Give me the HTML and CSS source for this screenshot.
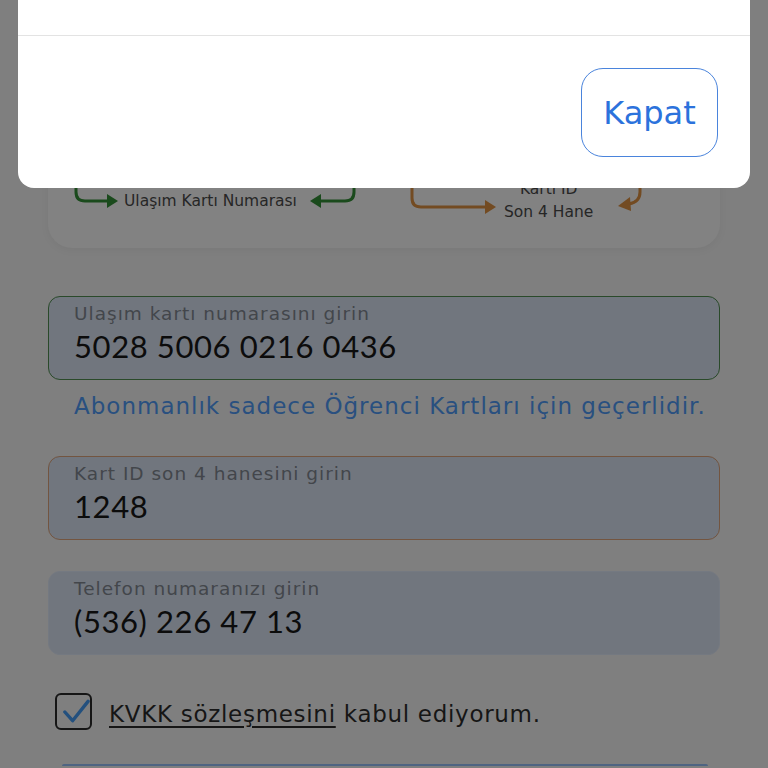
FILE: index.html
```html
<!DOCTYPE html>
<html lang="tr">
<head>
<meta charset="utf-8">
<title>Abonelik</title>
<link rel="stylesheet" href="styles.css">
</head>
<body>
<div class="page">
  <div class="card">
    <div class="diagram">
      <div class="group group-left">
        <svg class="br" width="46" height="36" viewBox="0 0 46 36">
          <path d="M2 0 V12 Q2 21 11 21 H34" fill="none" stroke="#1a4a1c" stroke-width="3" stroke-linecap="round"/>
          <path d="M33 14 L44 21 L33 28 Z" fill="#1a4a1c"/>
        </svg>
        <span class="diag-text">Ulaşım Kartı Numarası</span>
        <svg class="br" width="48" height="36" viewBox="0 0 48 36">
          <path d="M46 0 V12 Q46 21 37 21 H12" fill="none" stroke="#1a4a1c" stroke-width="3" stroke-linecap="round"/>
          <path d="M13 14 L2 21 L13 28 Z" fill="#1a4a1c"/>
        </svg>
      </div>
      <div class="group group-right">
        <svg class="br" width="88" height="36" viewBox="0 0 88 36">
          <path d="M2 0 V18 Q2 27 11 27 H76" fill="none" stroke="#734b22" stroke-width="3" stroke-linecap="round"/>
          <path d="M75 20 L86 27 L75 34 Z" fill="#734b22"/>
        </svg>
        <div class="diag-text two">
          <span>Kartı ID</span>
          <span>Son 4 Hane</span>
        </div>
        <svg class="br" width="26" height="36" viewBox="0 0 26 36">
          <path d="M23 0 V12 Q23 22 12 24" fill="none" stroke="#734b22" stroke-width="3" stroke-linecap="round"/>
          <path d="M13 17 L1 26 L14 31 Z" fill="#734b22"/>
        </svg>
      </div>
    </div>
  </div>

  <div class="field field-green">
    <span class="label">Ulaşım kartı numarasını girin</span>
    <span class="value">5028 5006 0216 0436</span>
  </div>
  <p class="helper">Abonmanlık sadece Öğrenci Kartları için geçerlidir.</p>

  <div class="field field-orange">
    <span class="label">Kart ID son 4 hanesini girin</span>
    <span class="value">1248</span>
  </div>

  <div class="field field-plain">
    <span class="label">Telefon numaranızı girin</span>
    <span class="value">(536) 226 47 13</span>
  </div>

  <div class="consent">
    <span class="checkbox">
      <svg width="30" height="30" viewBox="0 0 30 30">
        <path d="M4 15 L12 24 L28 4" fill="none" stroke="#23507e" stroke-width="3.5" stroke-linecap="round" stroke-linejoin="round"/>
      </svg>
    </span>
    <span class="consent-text"><u>KVKK sözleşmesini</u> kabul ediyorum.</span>
  </div>

  <div class="submit"></div>
</div>

<div class="modal">
  <div class="modal-body"></div>
  <div class="modal-footer">
    <button class="btn-close">Kapat</button>
  </div>
</div>
</body>
</html>
```

FILE: styles.css
```css
html, body {
  margin: 0;
  padding: 0;
}
body {
  background: #7f7f7f;
  font-family: "DejaVu Sans", "Noto Sans", sans-serif;
  width: 768px;
  height: 768px;
  overflow: hidden;
  position: relative;
}
.page {
  padding: 0 48px;
  display: flex;
  flex-direction: column;
}
.card {
  margin-top: 20px;
  height: 228px;
  background: #828282;
  border-radius: 24px;
  box-shadow: 0 2px 8px rgba(0,0,0,0.05);
  display: flex;
  flex-direction: column;
  justify-content: flex-end;
  padding: 0 0 24px 26px;
  box-sizing: border-box;
}
.diagram {
  display: flex;
  align-items: flex-start;
}
.group {
  display: flex;
  align-items: flex-start;
  flex: none;
}
.group-left { width: 282px; }
.group-right { margin-left: 54px; }
.br { display: block; flex: none; }
.diag-text {
  color: #262626;
  font-size: 15.5px;
  line-height: 20px;
  padding-top: 11px;
  white-space: nowrap;
}
.group-left .diag-text { margin: 0 auto 0 4px; }
.diag-text.two {
  display: flex;
  flex-direction: column;
  align-items: center;
  padding-top: 0;
  line-height: 23px;
  margin: -2px 24px 0 6px;
}
.field {
  box-sizing: border-box;
  height: 84px;
  border-radius: 12px;
  background: #71767e;
  border: 1.5px solid transparent;
  padding: 4px 0 0 25px;
  display: flex;
  flex-direction: column;
}
.field-green { margin-top: 48px; border-color: #2a4a2a; }
.field-orange { margin-top: 35px; border-color: #735540; }
.field-plain { margin-top: 31px; border-color: #747981; }
.label {
  color: #43464b;
  font-size: 18.5px;
  line-height: 26px;
  letter-spacing: 1px;
  white-space: nowrap;
}
.value {
  color: #0c0c0c;
  font-family: Lato, "Noto Sans", sans-serif;
  font-size: 31px;
  line-height: 38px;
  letter-spacing: 0.6px;
}
.helper {
  margin: 11px 0 0 26px;
  color: #295080;
  font-size: 23px;
  line-height: 30px;
  letter-spacing: 1px;
  white-space: nowrap;
}
.consent {
  margin: 38px 0 0 7px;
  display: flex;
  align-items: center;
  gap: 17px;
}
.checkbox {
  box-sizing: border-box;
  width: 37px;
  height: 37px;
  border: 2px solid #161616;
  border-radius: 6px;
  display: flex;
  align-items: center;
  justify-content: center;
}
.checkbox svg { display: block; margin: 0 0 0 4px; }
.consent-text {
  color: #161616;
  font-size: 23px;
  line-height: 30px;
  letter-spacing: 0.7px;
  white-space: nowrap;
  padding-top: 4px;
}
.consent-text u {
  text-decoration-thickness: 2px;
  text-underline-offset: 4px;
}
.submit {
  margin: 34px 12px 0 14px;
  height: 0;
  border-top: 2px solid #4f6482;
  border-radius: 8px 8px 0 0;
}
.modal {
  position: absolute;
  left: 18px;
  top: 0;
  width: 732px;
  background: #ffffff;
  border-radius: 0 0 16px 16px;
}
.modal-body {
  height: 35px;
  border-bottom: 1.5px solid #e3e3e3;
}
.modal-footer {
  display: flex;
  justify-content: flex-end;
  padding: 32px 32px 31px 0;
}
.btn-close {
  box-sizing: border-box;
  width: 137px;
  height: 89px;
  border: 1.5px solid #4a84dc;
  border-radius: 22px;
  background: #ffffff;
  color: #2c72dc;
  font-family: "DejaVu Sans", "Noto Sans", sans-serif;
  font-size: 32px;
  padding: 0;
}
```
